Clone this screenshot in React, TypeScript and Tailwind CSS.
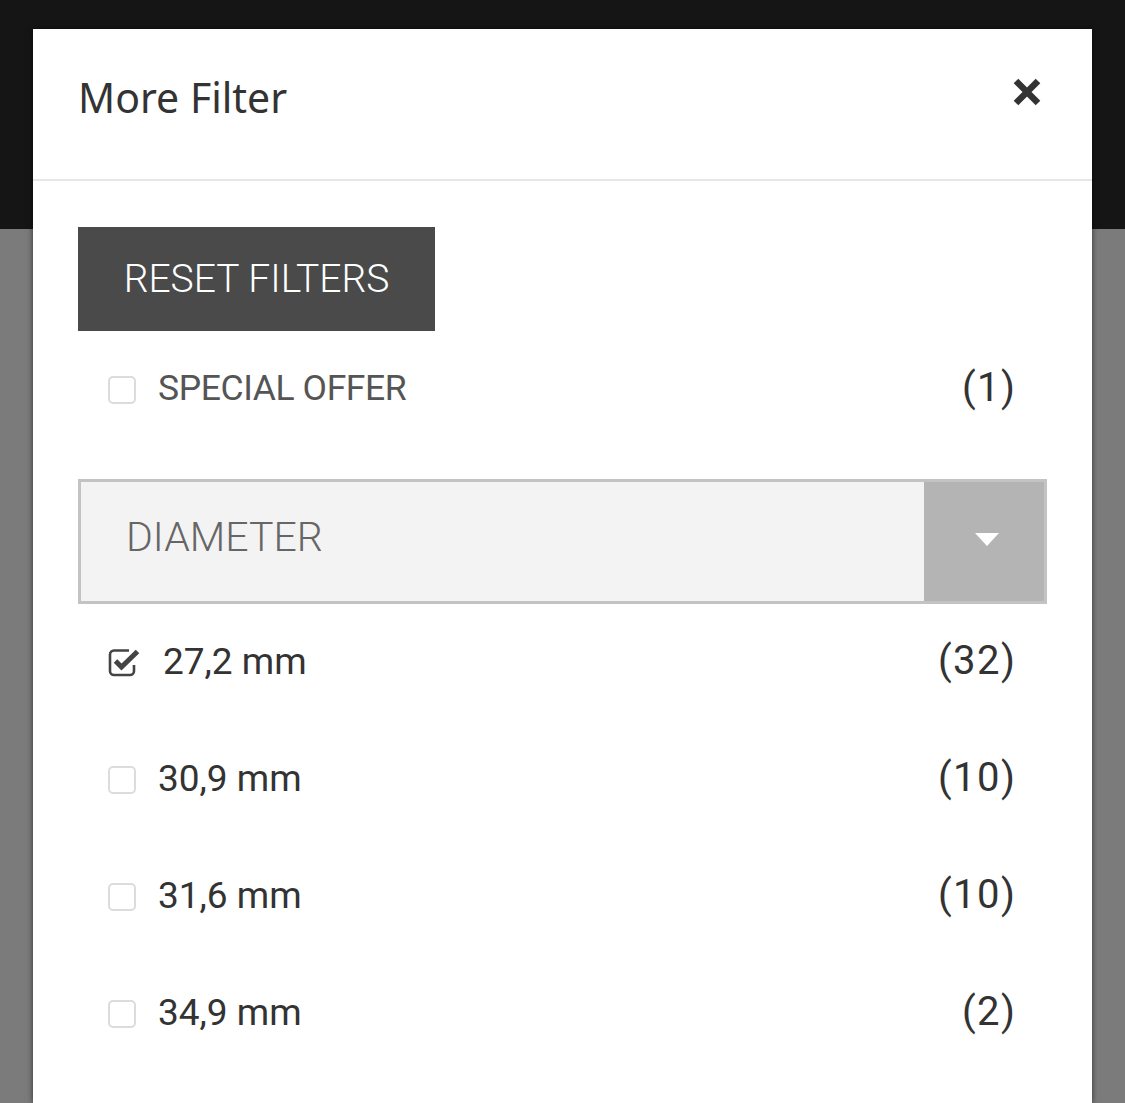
const items = [
    { label: '27,2 mm', count: 32, checked: true },
    { label: '30,9 mm', count: 10, checked: false },
    { label: '31,6 mm', count: 10, checked: false },
    { label: '34,9 mm', count: 2, checked: false },
];

function Box({ checked }: { checked: boolean }) {
    if (!checked) {
        return <span className="block w-[28px] h-[28px] shrink-0 rounded-[5px] border-2 border-[#dcdcdc] bg-white" />;
    }
    return (
        <svg width="33" height="31" viewBox="0 0 33 31" className="shrink-0">
            <path
                d="M21 3.5 H6 a4 4 0 0 0 -4 4 V24 a4 4 0 0 0 4 4 H22 a4 4 0 0 0 4 -4 V18"
                fill="none"
                stroke="#444"
                strokeWidth="2.6"
            />
            <polyline points="7.5,14 13.5,20 29.5,4.5" fill="none" stroke="#444" strokeWidth="5" strokeLinejoin="miter" />
        </svg>
    );
}

function Row({ label, count, checked, upper }: { label: string; count: number; checked: boolean; upper?: boolean }) {
    return (
        <li className="h-[117px] flex items-center pl-[30px] pr-[32px]">
            <Box checked={checked} />
            <span
                className={
                    upper
                        ? 'ml-[22px] text-[35.5px] text-[#555] tracking-[-0.4px] pb-[2px]'
                        : 'ml-[22px] text-[37px] text-[#333] pb-[2px]'
                }
            >
                {label}
            </span>
            <span className="ml-auto -mr-[1.5px] text-[40px] text-[#333] tracking-[1.5px] pb-[3px]">({count})</span>
        </li>
    );
}

export default function App() {
    return (
        <div
            className="min-h-[1103px] w-full overflow-hidden bg-[linear-gradient(to_bottom,#151515_0px,#151515_229px,#7b7b7b_229px)] pt-[29px] px-[33px] font-['Roboto',sans-serif]"
        >
            <div className="bg-white min-h-[1074px] shadow-[0_0_6px_rgba(0,0,0,0.6)]">
                <div className="h-[152px] border-b-2 border-[#e6e6e6] flex items-start justify-between pl-[45px] pr-[50px]">
                    <h1 className="mt-[44px] text-[41px] leading-[48px] text-[#333] font-['Noto_Sans',sans-serif]">More Filter</h1>
                    <button className="mt-[48px]" aria-label="Close">
                        <svg width="30" height="30" viewBox="0 0 30 30">
                            <path d="M4 4 L26 26 M26 4 L4 26" stroke="#333" strokeWidth="6.5" />
                        </svg>
                    </button>
                </div>

                <div className="px-[45px] pt-[46px]">
                    <button className="w-[357px] h-[104px] bg-[#4a4a4a] text-white text-[39px] font-light">
                        RESET FILTERS
                    </button>

                    <ul>
                        <Row label="SPECIAL OFFER" count={1} checked={false} upper />
                    </ul>

                    <div className="mt-[31px] h-[125px] flex border-[3px] border-[#c3c3c3] bg-[#f3f3f3]">
                        <span className="flex-1 flex items-center pl-[45px] pb-[8px] text-[41px] font-light text-[#666]">DIAMETER</span>
                        <span className="w-[120px] bg-[#b4b4b4] flex items-center justify-center">
                            <svg width="24" height="13" viewBox="0 0 24 13" className="ml-[5px] mb-[4px]">
                                <path d="M0 0 H24 L12 13 Z" fill="#fff" />
                            </svg>
                        </span>
                    </div>

                    <ul>
                        {items.map(it => (
                            <Row key={it.label} label={it.label} count={it.count} checked={it.checked} />
                        ))}
                    </ul>
                </div>
            </div>
        </div>
    );
}
